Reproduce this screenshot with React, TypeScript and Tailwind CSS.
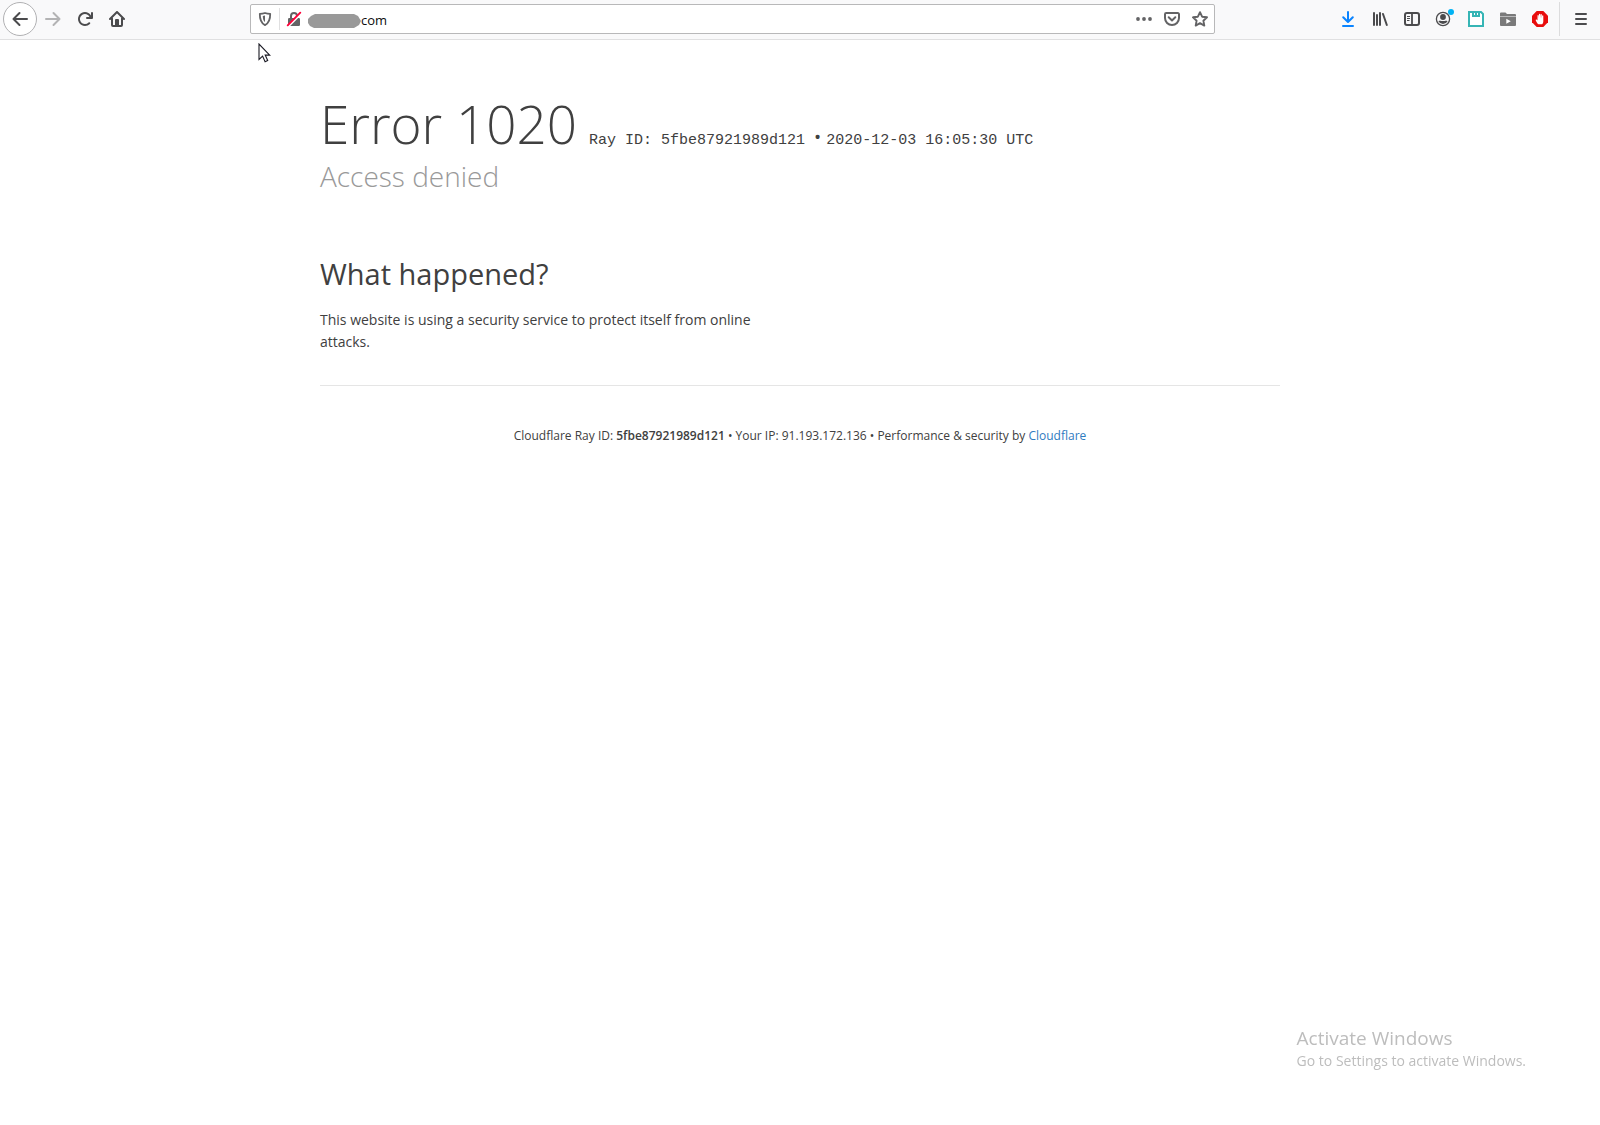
import React, { useState } from 'react';

interface IconProps {
  className?: string;
}

const BackIcon: React.FC<IconProps> = ({ className }) => (
  <svg viewBox="0 0 16 16" fill="none" stroke="currentColor" strokeWidth="2" strokeLinecap="round" strokeLinejoin="round" className={className}>
    <path d="M15 8H1.5M7.5 2 1.5 8l6 6" />
  </svg>
);

const ForwardIcon: React.FC<IconProps> = ({ className }) => (
  <svg viewBox="0 0 16 16" fill="none" stroke="currentColor" strokeWidth="2" strokeLinecap="round" strokeLinejoin="round" className={className}>
    <path d="M1 8h13.5M8.500 2l6 6-6 6" />
  </svg>
);

const ReloadIcon: React.FC<IconProps> = ({ className }) => (
  <svg viewBox="0 0 16 16" className={className}>
    <path
      fill="currentColor"
      d="M15 1a1 1 0 0 0-1 1v2.418A6.995 6.995 0 1 0 8 15a6.954 6.954 0 0 0 4.950-2.050 1 1 0 0 0-1.414-1.414A5.019 5.019 0 1 1 12.549 6H10a1 1 0 0 0 0 2h5a1 1 0 0 0 1-1V2a1 1 0 0 0-1-1z"
    />
  </svg>
);

const HomeIcon: React.FC<IconProps> = ({ className }) => (
  <svg viewBox="0 0 16 16" fill="none" stroke="currentColor" strokeWidth="2" strokeLinecap="round" strokeLinejoin="round" className={className}>
    <path d="M1 8l7-7 7 7" />
    <path d="M3 7.500V14a1 1 0 0 0 1 1h8a1 1 0 0 0 1-1V7.500" />
    <path d="M7 14V9h2v5" />
  </svg>
);

const ShieldIcon: React.FC<IconProps> = ({ className }) => (
  <svg viewBox="0 0 16 16" className={className}>
    <path
      d="M8 2c-1.800.6-3.600.8-5.200.8C2.700 8.500 3.500 12 8 14.100c4.500-2.100 5.300-5.600 5.200-11.300C11.600 2.800 9.800 2.600 8 2z"
      fill="none"
      stroke="currentColor"
      strokeWidth="1.800"
      strokeLinejoin="round"
    />
    <path d="M8 4.600c-.8.3-1.500.4-2.200.4.1 3 .5 4.900 2.200 6.100z" fill="currentColor" />
  </svg>
);

const InsecureLockIcon: React.FC<IconProps> = ({ className }) => (
  <svg viewBox="0 0 16 16" className={className}>
    <path d="M5 7.500V5a3 3 0 0 1 6 0v2.500" fill="none" stroke="currentColor" strokeWidth="2" />
    <rect x="2" y="7" width="12" height="8" rx="1.200" fill="currentColor" />
    <path d="M2.500 14.800 14.500 2.800" stroke="#fff" strokeWidth="2.600" />
    <path d="M1.700 14.300 14.300 1.700" stroke="#ff0039" strokeWidth="1.900" strokeLinecap="round" />
  </svg>
);

const DotsIcon: React.FC<IconProps> = ({ className }) => (
  <svg viewBox="0 0 16 16" fill="currentColor" className={className}>
    <circle cx="2" cy="8" r="1.900" />
    <circle cx="8" cy="8" r="1.900" />
    <circle cx="14" cy="8" r="1.900" />
  </svg>
);

const PocketIcon: React.FC<IconProps> = ({ className }) => (
  <svg viewBox="0 0 16 16" fill="none" stroke="currentColor" strokeWidth="2" strokeLinecap="round" strokeLinejoin="round" className={className}>
    <path d="M2.200 2h11.600A1.200 1.200 0 0 1 15 3.200V7a7 7 0 0 1-14 0V3.200A1.200 1.200 0 0 1 2.200 2z" />
    <path d="M4.700 6.300 8 9.400l3.300-3.100" />
  </svg>
);

const StarIcon: React.FC<IconProps> = ({ className }) => (
  <svg viewBox="0 0 16 16" fill="none" stroke="currentColor" strokeWidth="1.900" strokeLinejoin="round" className={className}>
    <path d="M8 1.200l2.100 4.500 4.900.6-3.600 3.400.9 4.900L8 12.200l-4.300 2.400.9-4.900L1 6.300l4.900-.6z" />
  </svg>
);

const DownloadIcon: React.FC<IconProps> = ({ className }) => (
  <svg viewBox="0 0 16 16" fill="none" stroke="currentColor" strokeWidth="2" strokeLinecap="round" strokeLinejoin="round" className={className}>
    <path d="M8 1v9.500M3.200 6.200 8 11l4.800-4.800M3 15h10" />
  </svg>
);

const LibraryIcon: React.FC<IconProps> = ({ className }) => (
  <svg viewBox="0 0 16 16" fill="none" stroke="currentColor" strokeWidth="2" strokeLinecap="round" className={className}>
    <path d="M2 2v12M5 4v10M8 2v12M11 3l3.800 11" />
  </svg>
);

const SidebarIcon: React.FC<IconProps> = ({ className }) => (
  <svg viewBox="0 0 16 16" fill="none" stroke="currentColor" className={className}>
    <rect x="1" y="2" width="14" height="12" rx="2" strokeWidth="2" />
    <path d="M8 2v12" strokeWidth="1.800" />
    <path d="M3 5.500h3M3 7.500h3M3 9.500h2.500" strokeWidth="1" />
  </svg>
);

const AccountIcon: React.FC<IconProps> = ({ className }) => (
  <svg viewBox="0 0 20 20" className={className}>
    <circle cx="9" cy="10" r="6.600" fill="none" stroke="currentColor" strokeWidth="1.300" />
    <circle cx="9" cy="8" r="2.900" fill="currentColor" />
    <path d="M4.400 12.200c1.500-1 2.300-.2 4.600-.2s3.100-.8 4.600.2a5.200 5.200 0 0 1-9.200 0z" fill="currentColor" />
    <circle cx="17" cy="3" r="3" fill="#00b3f4" />
  </svg>
);

const SaveIcon: React.FC<IconProps> = ({ className }) => (
  <svg viewBox="0 0 16 16" className={className}>
    <path d="M1 1h12l2 2v12H1z" fill="#fff" stroke="#36b5b5" strokeWidth="2" />
    <path d="M4 1h8v5H4z" fill="#36b5b5" />
    <path d="M6 2h1v2H6zM9 2h1v2H9z" fill="#fff" />
  </svg>
);

const VideoFolderIcon: React.FC<IconProps> = ({ className }) => (
  <svg viewBox="0 0 16 16" className={className}>
    <path d="M0 4V2.500a1 1 0 0 1 1-1h4.500L7 3h8a1 1 0 0 1 1 1v1H0z" fill="#7a7a7a" />
    <path d="M0 5.500h16V14a1 1 0 0 1-1 1H1a1 1 0 0 1-1-1z" fill="#7a7a7a" />
    <path d="M6.300 7.800 10.800 10.300 6.300 12.800z" fill="#fff" />
  </svg>
);

const BlockerIcon: React.FC<IconProps> = ({ className }) => (
  <svg viewBox="0 0 16 16" className={className}>
    <path d="M4.700 0h6.600L16 4.700v6.600L11.300 16H4.700L0 11.300V4.700z" fill="#e80d0d" />
    <path
      d="M6.300 13.300C5.100 12.300 4.500 10.800 3.700 9.200c-.2-.7.7-1 1.200-.4l.6.8V4.700c0-.8 1-.8 1.200 0l.2 2.800V3.400c.1-.8 1.200-.8 1.300 0l.1 4 .2-3.800c.1-.8 1.200-.8 1.300 0v4l.3-2.800c.1-.8 1.200-.8 1.200 0v5.500c0 1.300-.5 2.200-1.200 3z"
      fill="#fff"
    />
  </svg>
);

const MenuIcon: React.FC<IconProps> = ({ className }) => (
  <svg viewBox="0 0 16 16" fill="none" stroke="currentColor" strokeWidth="2" strokeLinecap="round" className={className}>
    <path d="M3 3h10M3 8h10M3 13h10" />
  </svg>
);

const Cursor: React.FC<IconProps> = ({ className }) => (
  <svg viewBox="0 0 13 20" className={className}>
    <path d="M1 1v15.500l3.600-3.400 2.500 5.600 2.600-1.200-2.500-5.400h4.500z" fill="#fff" stroke="#1a1a24" strokeWidth="1.100" />
  </svg>
);

interface ToolbarButtonProps {
  label: string;
  className?: string;
  children: React.ReactNode;
}

const ToolbarButton: React.FC<ToolbarButtonProps> = ({ label, className = 'text-[#4b4b4d]', children }) => (
  <button type="button" aria-label={label} className={`flex h-8 w-8 items-center justify-center ${className}`}>
    {children}
  </button>
);

const Toolbar: React.FC = () => {
  const [address, setAddress] = useState('com');

  return (
    <div className="flex h-10 items-center border-b border-[#e0e0e1] bg-[#f9f9fa] pb-px">
      {/* Navigation */}
      <div className="flex items-center pl-[3px]">
        <button
          type="button"
          aria-label="Back"
          className="flex h-[34px] w-[34px] items-center justify-center rounded-full border border-[#b1b1b3] bg-white text-[#4b4b4d]"
        >
          <BackIcon className="h-4 w-4" />
        </button>
        <ToolbarButton label="Forward" className="text-[#b3b3b4]">
          <ForwardIcon className="h-4 w-4" />
        </ToolbarButton>
        <ToolbarButton label="Reload">
          <ReloadIcon className="h-4 w-4" />
        </ToolbarButton>
        <ToolbarButton label="Home">
          <HomeIcon className="h-4 w-4" />
        </ToolbarButton>
      </div>

      {/* Address bar */}
      <div className="mx-[117px] flex h-[30px] flex-1 items-center rounded-xs border border-[#b8b8b9] bg-white text-[#636365]">
        <button type="button" aria-label="Tracking protection" className="flex h-7 w-7 items-center justify-center">
          <ShieldIcon className="h-4 w-4" />
        </button>
        <div className="h-[22px] w-px bg-[#e0e0e1]" />
        <button type="button" aria-label="Connection is not secure" className="flex h-7 w-7 items-center justify-center">
          <InsecureLockIcon className="h-4 w-4" />
        </button>
        <svg viewBox="0 0 53 14" className="mt-1 h-[14px] w-[53px]">
          <path d="M3 2 7 0h39l4 2 3 5-2 4-5 3H6l-4-2-2-3V5z" fill="#999" />
        </svg>
        <input
          type="text"
          aria-label="Address"
          value={address}
          onChange={(e) => setAddress(e.target.value)}
          className="h-7 min-w-0 flex-1 bg-transparent pt-0.5 text-[13px] text-[#0c0c0d] outline-none"
        />
        <div className="flex">
          <button type="button" aria-label="Page actions" className="flex h-7 w-7 items-center justify-center">
            <DotsIcon className="h-4 w-4" />
          </button>
          <button type="button" aria-label="Save to Pocket" className="flex h-7 w-7 items-center justify-center">
            <PocketIcon className="h-4 w-4" />
          </button>
          <button type="button" aria-label="Bookmark this page" className="flex h-7 w-7 items-center justify-center">
            <StarIcon className="h-4 w-4" />
          </button>
        </div>
      </div>

      {/* Extensions and menu */}
      <div className="flex items-center">
        <ToolbarButton label="Downloads" className="text-[#0a84ff]">
          <DownloadIcon className="h-4 w-4" />
        </ToolbarButton>
        <ToolbarButton label="Library">
          <LibraryIcon className="h-4 w-4" />
        </ToolbarButton>
        <ToolbarButton label="Sidebars">
          <SidebarIcon className="h-4 w-4" />
        </ToolbarButton>
        <ToolbarButton label="Account">
          <AccountIcon className="h-5 w-5" />
        </ToolbarButton>
        <ToolbarButton label="Save page">
          <SaveIcon className="h-4 w-4" />
        </ToolbarButton>
        <ToolbarButton label="Video downloads">
          <VideoFolderIcon className="h-4 w-4" />
        </ToolbarButton>
        <ToolbarButton label="Ad blocker">
          <BlockerIcon className="h-4 w-4" />
        </ToolbarButton>
        <div className="ml-[3px] h-[34px] w-px bg-[#dcdcdd]" />
        <div className="pr-[3px] pl-[5px]">
          <ToolbarButton label="Open menu">
            <MenuIcon className="h-4 w-4" />
          </ToolbarButton>
        </div>
      </div>
    </div>
  );
};

const ErrorPage: React.FC = () => (
  <main className="mx-auto w-full max-w-[960px] text-[14px] text-[#404040]">
    <header className="pt-[54px]">
      <h1 className="flex flex-wrap items-baseline gap-x-3">
        <span className="text-[53px] leading-[60px] font-light">Error 1020</span>
        <span className="text-[15px] leading-6">
          <span className="font-['Liberation_Mono',monospace]">Ray ID: 5fbe87921989d121 </span>
          <span className="text-[19px]">&bull; </span>
          <span className="font-['Liberation_Mono',monospace]">2020-12-03 16:05:30 UTC</span>
        </span>
      </h1>
      <h2 className="mt-0.5 text-[28px] leading-[40px] font-light text-[#999]">Access denied</h2>
    </header>

    <section className="mt-[58px] w-1/2 pr-6">
      <h2 className="text-[29px] leading-[40px]">What happened?</h2>
      <p className="mt-[15px] leading-[22px]">
        This website is using a security service to protect itself from online attacks.
      </p>
    </section>

    <footer className="mt-8 border-t border-[#e5e5e5] pt-10 text-center text-[12px] leading-5">
      <span>
        Cloudflare Ray ID: <strong className="font-semibold">5fbe87921989d121</strong>
      </span>
      <span> &bull; </span>
      <span>Your IP: 91.193.172.136</span>
      <span> &bull; </span>
      <span>
        Performance &amp; security by{' '}
        <a href="https://www.cloudflare.com/" className="text-[#2f7bbf]">
          Cloudflare
        </a>
      </span>
    </footer>
  </main>
);

export default function App() {
  return (
    <div className="min-h-screen bg-white font-['Open_Sans','Noto_Sans',sans-serif]">
      <Toolbar />
      <ErrorPage />

      {/* Mouse pointer */}
      <Cursor className="pointer-events-none absolute top-[43px] left-[258px] h-5 w-[13px]" />

      {/* Activation watermark */}
      <aside className="pointer-events-none fixed right-[74px] bottom-[53px] text-[#bdbdbd]">
        <p className="text-[19px] leading-6">Activate Windows</p>
        <p className="text-[14px] leading-[22px]">Go to Settings to activate Windows.</p>
      </aside>
    </div>
  );
}
